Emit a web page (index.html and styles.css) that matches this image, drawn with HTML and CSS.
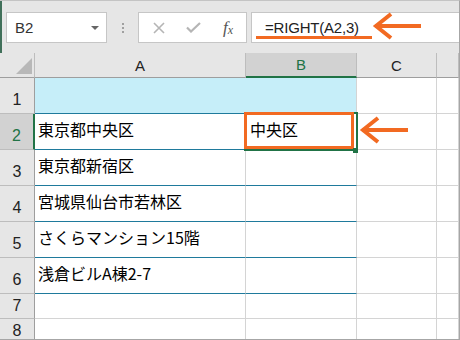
FILE: index.html
```html
<!DOCTYPE html>
<html lang="ja">

<head>
    <meta charset="UTF-8" />
    <title>RIGHT関数</title>
    <link rel="stylesheet" href="styles.css">
</head>

<body>
    <div class="app">
        <div class="toolbar">
            <div class="namebox">
                <span>B2</span>
                <i class="caret"></i>
            </div>
            <div class="grip"><i></i><i></i><i></i></div>
            <div class="fbtns">
                <svg width="12" height="12" viewBox="0 0 12 12"><path d="M1 1L11 11M11 1L1 11" stroke="#b5b5b5" stroke-width="1.6" fill="none"/></svg>
                <svg width="15" height="11" viewBox="0 0 15 11"><path d="M1 5.5L5 9.5L14 1" stroke="#b5b5b5" stroke-width="2.2" fill="none"/></svg>
                <span class="fx">f<sub>x</sub></span>
            </div>
            <div class="finput">
                <span class="formula">=RIGHT(A2,3)</span>
                <span class="mark"></span>
                <svg class="arrow arrow-top" width="50" height="28" viewBox="0 0 50 28"><path d="M49 14H6M19 2L4 14L19 26" stroke="#f26a22" stroke-width="4" fill="none"/></svg>
            </div>
        </div>

        <div class="sheet">
            <div class="corner"><i></i></div>
            <div class="colhead">A</div>
            <div class="colhead sel">B</div>
            <div class="colhead">C</div>
            <div class="colhead"></div>

            <div class="rowhead">1</div>
            <div class="cell fill teal nofill-line"></div>
            <div class="cell fill teal"></div>
            <div class="cell"></div>
            <div class="cell"></div>

            <div class="rowhead sel">2</div>
            <div class="cell teal">東京都中央区</div>
            <div class="cell teal active">
                中央区
                <span class="selbox"></span>
                <span class="hilite"></span>
                <span class="handle"></span>
                <svg class="arrow arrow-cell" width="50" height="28" viewBox="0 0 50 28"><path d="M49 14H6M19 2L4 14L19 26" stroke="#f26a22" stroke-width="4" fill="none"/></svg>
            </div>
            <div class="cell"></div>
            <div class="cell"></div>

            <div class="rowhead">3</div>
            <div class="cell teal">東京都新宿区</div>
            <div class="cell teal"></div>
            <div class="cell"></div>
            <div class="cell"></div>

            <div class="rowhead">4</div>
            <div class="cell teal">宮城県仙台市若林区</div>
            <div class="cell teal"></div>
            <div class="cell"></div>
            <div class="cell"></div>

            <div class="rowhead">5</div>
            <div class="cell teal">さくらマンション15階</div>
            <div class="cell teal"></div>
            <div class="cell"></div>
            <div class="cell"></div>

            <div class="rowhead">6</div>
            <div class="cell teal">浅倉ビルA棟2-7</div>
            <div class="cell teal"></div>
            <div class="cell"></div>
            <div class="cell"></div>

            <div class="rowhead short">7</div>
            <div class="cell"></div>
            <div class="cell"></div>
            <div class="cell"></div>
            <div class="cell"></div>

            <div class="rowhead short">8</div>
            <div class="cell"></div>
            <div class="cell"></div>
            <div class="cell"></div>
            <div class="cell"></div>
        </div>
    </div>
</body>

</html>
```

FILE: styles.css
```css
body {
    margin: 0;
    background: #fff;
}

.app {
    width: 460px;
    height: 340px;
    box-sizing: border-box;
    overflow: hidden;
    background: #e6e6e6;
    border-top: 1px solid #c4c4c4;
    border-right: 1px solid #a6a6a6;
    border-bottom: 1px solid #a6a6a6;
    font-family: "Liberation Sans", "Noto Sans CJK JP", sans-serif;
}

/* formula bar */
.toolbar {
    height: 52px;
    box-sizing: border-box;
    display: flex;
    align-items: flex-start;
    padding: 11px 0 0 6px;
    border-left: 2px solid #41705a;
}

.toolbar > div {
    height: 31px;
    box-sizing: border-box;
}

.namebox {
    width: 101px;
    margin-left: -2px;
    background: #fff;
    border: 1px solid #c6c6c6;
    display: flex;
    align-items: center;
    justify-content: space-between;
    padding: 0 7px 0 8px;
    font-size: 15px;
    color: #333;
}

.caret {
    width: 0;
    height: 0;
    border-left: 4px solid transparent;
    border-right: 4px solid transparent;
    border-top: 4px solid #666;
}

.grip {
    width: 31px;
    display: flex;
    flex-direction: column;
    align-items: center;
    justify-content: center;
    gap: 2px;
}

.grip i {
    width: 2px;
    height: 2px;
    background: #a0a0a0;
}

.fbtns {
    width: 109px;
    background: #fff;
    border: 1px solid #c6c6c6;
    display: flex;
    align-items: center;
    padding-left: 14px;
    gap: 21px;
}

.fx {
    font-family: "Liberation Serif", serif;
    font-style: italic;
    font-size: 17px;
    color: #555;
    margin-left: 1px;
}

.fx sub {
    font-size: 12px;
    vertical-align: -1px;
}

.finput {
    flex: 1;
    margin-left: 4px;
    background: #fff;
    border: 1px solid #c6c6c6;
    border-right: none;
    position: relative;
    display: flex;
    align-items: center;
    padding-left: 13px;
}

.formula {
    font-size: 15px;
    color: #222;
    letter-spacing: -0.2px;
}

.mark {
    position: absolute;
    left: 4px;
    top: 23px;
    width: 116px;
    height: 3px;
    background: #f26a22;
}

.arrow {
    position: absolute;
}

.arrow-top {
    left: 120px;
    top: -1px;
}

/* grid */
.sheet {
    display: grid;
    grid-template-columns: 35px 211px 111px 80px 1fr;
    grid-template-rows: 25px repeat(6, 36px) 25px 25px;
}

.sheet > div {
    box-sizing: border-box;
    border-right: 1px solid #d4d4d4;
    border-bottom: 1px solid #d4d4d4;
}

.corner {
    background: #e6e6e6;
    display: flex;
    justify-content: flex-end;
    align-items: flex-end;
    padding: 0 2px 3px 0;
}

.sheet > .corner,
.sheet > .colhead {
    border-right-color: #bdbdbd;
    border-bottom-color: #9e9e9e;
}

.corner i {
    width: 0;
    height: 0;
    border-left: 16px solid transparent;
    border-bottom: 16px solid #b8b8b8;
}

.colhead {
    background: #e6e6e6;
    display: flex;
    align-items: center;
    justify-content: center;
    font-size: 15px;
    color: #222;
}

.sheet > .colhead.sel {
    background: #d2d2d2;
    color: #217346;
    border-bottom: 2px solid #217346;
}

.sheet > .rowhead {
    background: #e6e6e6;
    border-right-color: #9e9e9e;
    border-bottom-color: #bdbdbd;
    display: flex;
    align-items: flex-end;
    justify-content: center;
    font-size: 16px;
    line-height: 20px;
    padding-bottom: 3px;
    color: #222;
}

.sheet > .rowhead.short {
    align-items: center;
    padding-bottom: 0;
}

.sheet > .rowhead.sel {
    background: #d2d2d2;
    color: #217346;
    border-right: 2px solid #217346;
}

.cell {
    background: #fff;
    display: flex;
    align-items: center;
    padding: 0 0 6px 3px;
    font-family: "Noto Sans CJK JP", sans-serif;
    font-size: 16px;
    color: #000;
    white-space: nowrap;
}

.sheet > .cell.teal {
    border-bottom-color: #1f7a9c;
}

.sheet > .cell.fill {
    background: #c6eef9;
}

.sheet > .cell.nofill-line {
    border-right-color: #c6eef9;
}

.cell.active {
    position: relative;
    z-index: 2;
    padding-left: 4px;
}

.selbox {
    position: absolute;
    left: -2px;
    top: -2px;
    width: 114px;
    height: 39px;
    box-sizing: border-box;
    border: 2px solid #217346;
}

.hilite {
    position: absolute;
    left: -2px;
    top: -2px;
    width: 110px;
    height: 37px;
    box-sizing: border-box;
    border: 3px solid #f26a22;
}

.handle {
    position: absolute;
    left: 107px;
    top: 34px;
    width: 5px;
    height: 5px;
    background: #217346;
}

.arrow-cell {
    left: 113px;
    top: 2px;
}
```
